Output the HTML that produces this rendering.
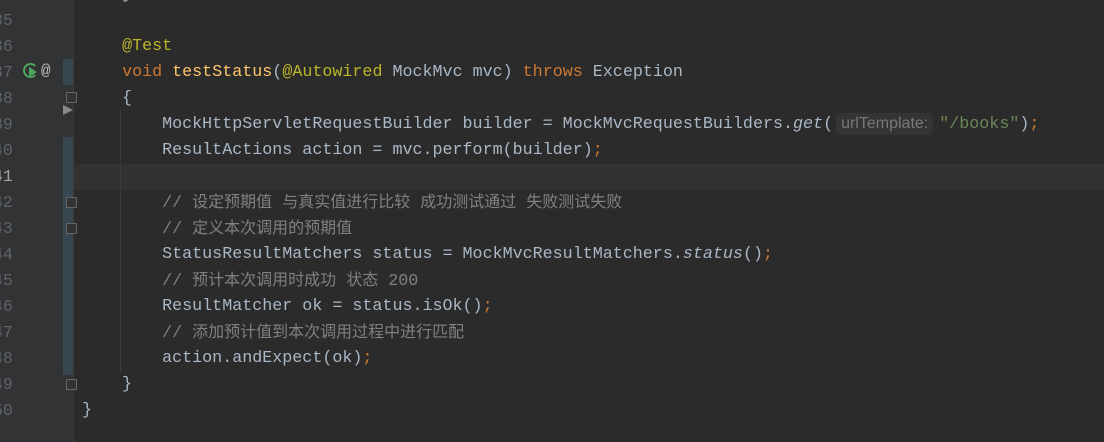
<!DOCTYPE html><html><head><meta charset="utf-8"><style>
body{margin:0;width:1104px;height:442px;background:#2b2b2b;overflow:hidden;position:relative;font-family:"Liberation Mono",monospace;font-size:16.7px}
.g{position:absolute;left:0;top:0;width:73px;height:442px;background:#313335;border-right:1px solid #3a3a3a}
.l{position:absolute;left:82px;white-space:pre;line-height:26px;color:#a9b7c6}
.c{color:#808080}.k{color:#cc7832}.a{color:#bbb529}.m{color:#ffc66d}.s{color:#6a8759}.num{color:#6897bb}
.z{font-family:"Noto Sans CJK SC",sans-serif;font-size:16px;line-height:20px}
.cb{position:absolute;left:63px;width:10px;background:#374752}
.f{position:absolute;left:66px;width:9px;height:9px;border:1px solid #666;border-radius:1px;background:#313335}
</style></head><body>
<div class="g"></div>
<div class="cb" style="top:59px;height:26px"></div>
<div class="cb" style="top:137px;height:238px"></div>
<div style="position:absolute;left:74px;top:164px;width:1030px;height:26px;background:#323232"></div>
<div style="position:absolute;left:120px;top:110px;width:1px;height:262px;background:#3b3b3b"></div>
<div class="f" style="top:92px"></div><div class="f" style="top:197px"></div><div class="f" style="top:223px"></div><div class="f" style="top:379px"></div>
<div style="position:absolute;left:63px;top:105px;border-left:10px solid #888;border-top:5px solid transparent;border-bottom:5px solid transparent"></div>
<div style="position:absolute;left:23px;top:63px;width:11px;height:11px;border-radius:50%;border:2px solid #4ea65a;border-right-color:transparent"></div>
<div style="position:absolute;left:29px;top:67px;border-left:8px solid #4ea65a;border-top:5px solid transparent;border-bottom:5px solid transparent"></div>
<div style="position:absolute;left:41px;top:58px;color:#bbb;line-height:26px;font-size:16px">@</div>
<div style="position:absolute;left:-7px;top:8px;color:#606366;font-size:16.5px;line-height:26px">35<br>36<br>37<br>38<br>39<br>40<br><span style="color:#a4a3a3">41</span><br>42<br>43<br>44<br>45<br>46<br>47<br>48<br>49<br>50</div>
<div class="l" style="top:-18px">    }</div>
<div class="l" style="top:34px">    <span class="a">@Test</span></div>
<div class="l" style="top:60px">    <span class="k">void </span><span class="m">testStatus</span>(<span class="a">@Autowired</span> MockMvc mvc) <span class="k">throws</span> Exception</div>
<div class="l" style="top:86px">    {</div>
<div class="l" style="top:112px">        MockHttpServletRequestBuilder builder = MockMvcRequestBuilders.<i>get</i>(<span style="display:inline-block;background:#333535;color:#787878;font-family:'Liberation Sans',sans-serif;font-size:16px;line-height:22px;border-radius:4px;padding:0 5px;margin:0 6px 0 3px">urlTemplate:</span><span class="s">"/books"</span>)<span class="k">;</span></div>
<div class="l" style="top:138px">        ResultActions action = mvc.perform(builder)<span class="k">;</span></div>
<div class="l c" style="top:190px">        // <span class="z">设定预期值</span> <span class="z">与真实值进行比较</span> <span class="z">成功测试通过</span> <span class="z">失败测试失败</span></div>
<div class="l c" style="top:216px">        // <span class="z">定义本次调用的预期值</span></div>
<div class="l" style="top:242px">        StatusResultMatchers status = MockMvcResultMatchers.<i>status</i>()<span class="k">;</span></div>
<div class="l c" style="top:268px">        // <span class="z">预计本次调用时成功</span> <span class="z">状态</span> 200</div>
<div class="l" style="top:294px">        ResultMatcher ok = status.isOk()<span class="k">;</span></div>
<div class="l c" style="top:320px">        // <span class="z">添加预计值到本次调用过程中进行匹配</span></div>
<div class="l" style="top:346px">        action.andExpect(ok)<span class="k">;</span></div>
<div class="l" style="top:372px">    }</div>
<div class="l" style="top:398px">}</div>
</body></html>
